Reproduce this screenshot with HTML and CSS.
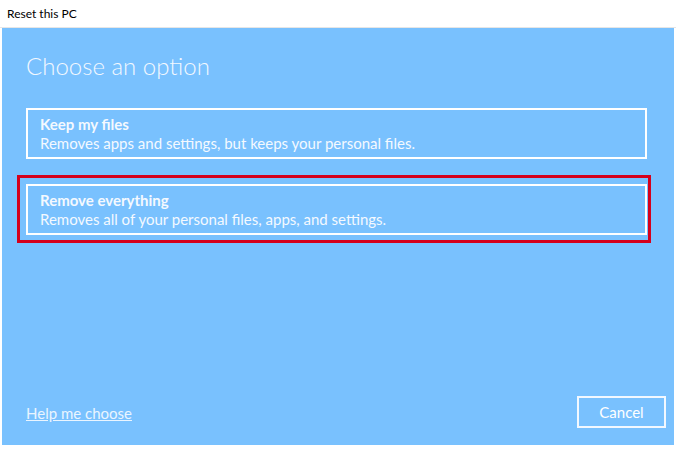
FILE: index.html
```html
<!DOCTYPE html>
<html lang="en">
<head>
    <meta charset="UTF-8">
    <meta name="viewport" content="width=device-width, initial-scale=1.0">
    <title>Reset this PC</title>
    <link rel="stylesheet" href="styles.css">
</head>
<body>
    <div class="window">
        <!-- Title bar -->
        <div class="titlebar">Reset this PC</div>

        <div class="panel">
            <h1 class="heading">Choose an option</h1>

            <div class="option">
                <div class="option-title">Keep my files</div>
                <div class="option-desc">Removes apps and settings, but keeps your personal files.</div>
            </div>

            <!-- Red highlight around the second choice -->
            <div class="highlight">
                <div class="option">
                    <div class="option-title">Remove everything</div>
                    <div class="option-desc">Removes all of your personal files, apps, and settings.</div>
                </div>
            </div>

            <div class="footer">
                <a href="#" class="help-link">Help me choose</a>
                <button class="cancel">Cancel</button>
            </div>
        </div>
    </div>
</body>
</html>
```

FILE: styles.css
```css
body {
    margin: 0;
    padding: 0;
    font-family: "Segoe UI", Lato, "Open Sans", sans-serif;
    background-color: #f3f3f3;
}

.window {
    width: 676px;
    height: 450px;
    background-color: #ffffff;
    display: flex;
    flex-direction: column;
}

.titlebar {
    height: 28px;
    line-height: 28px;
    padding-left: 7px;
    font-size: 12px;
    color: #000;
    border-bottom: 1px solid #e6e6e6;
    box-sizing: border-box;
}

.panel {
    height: 417px;
    margin: 0 2px;
    background-color: #79c1fe;
    box-sizing: border-box;
    padding: 0 27px 17px 24px;
    display: flex;
    flex-direction: column;
}

.heading {
    margin: 21px 0 25px;
    font-size: 24px;
    font-weight: 300;
    line-height: 34px;
    color: #f2f8ff;
}

.option {
    border: 2px solid #ffffff;
    padding: 5px 12px 4px;
    color: #f4f9ff;
    font-size: 15px;
    line-height: 19px;
}

.option-title {
    font-weight: bold;
}

/* Red annotation box */
.highlight {
    border: 3px solid #d5001c;
    margin: 16px -4px 0 -9px;
    padding: 6px 1px 5px 6px;
}

.footer {
    margin-top: auto;
    margin-right: -19px;
    display: flex;
    justify-content: space-between;
    align-items: center;
}

.help-link {
    color: #eaf5ff;
    font-size: 15px;
    text-decoration: underline;
    margin-top: 2px;
}

.cancel {
    width: 89px;
    height: 32px;
    background-color: transparent;
    border: 2px solid #f2f8ff;
    color: #ffffff;
    font-family: inherit;
    font-size: 15px;
    cursor: pointer;
}
```
